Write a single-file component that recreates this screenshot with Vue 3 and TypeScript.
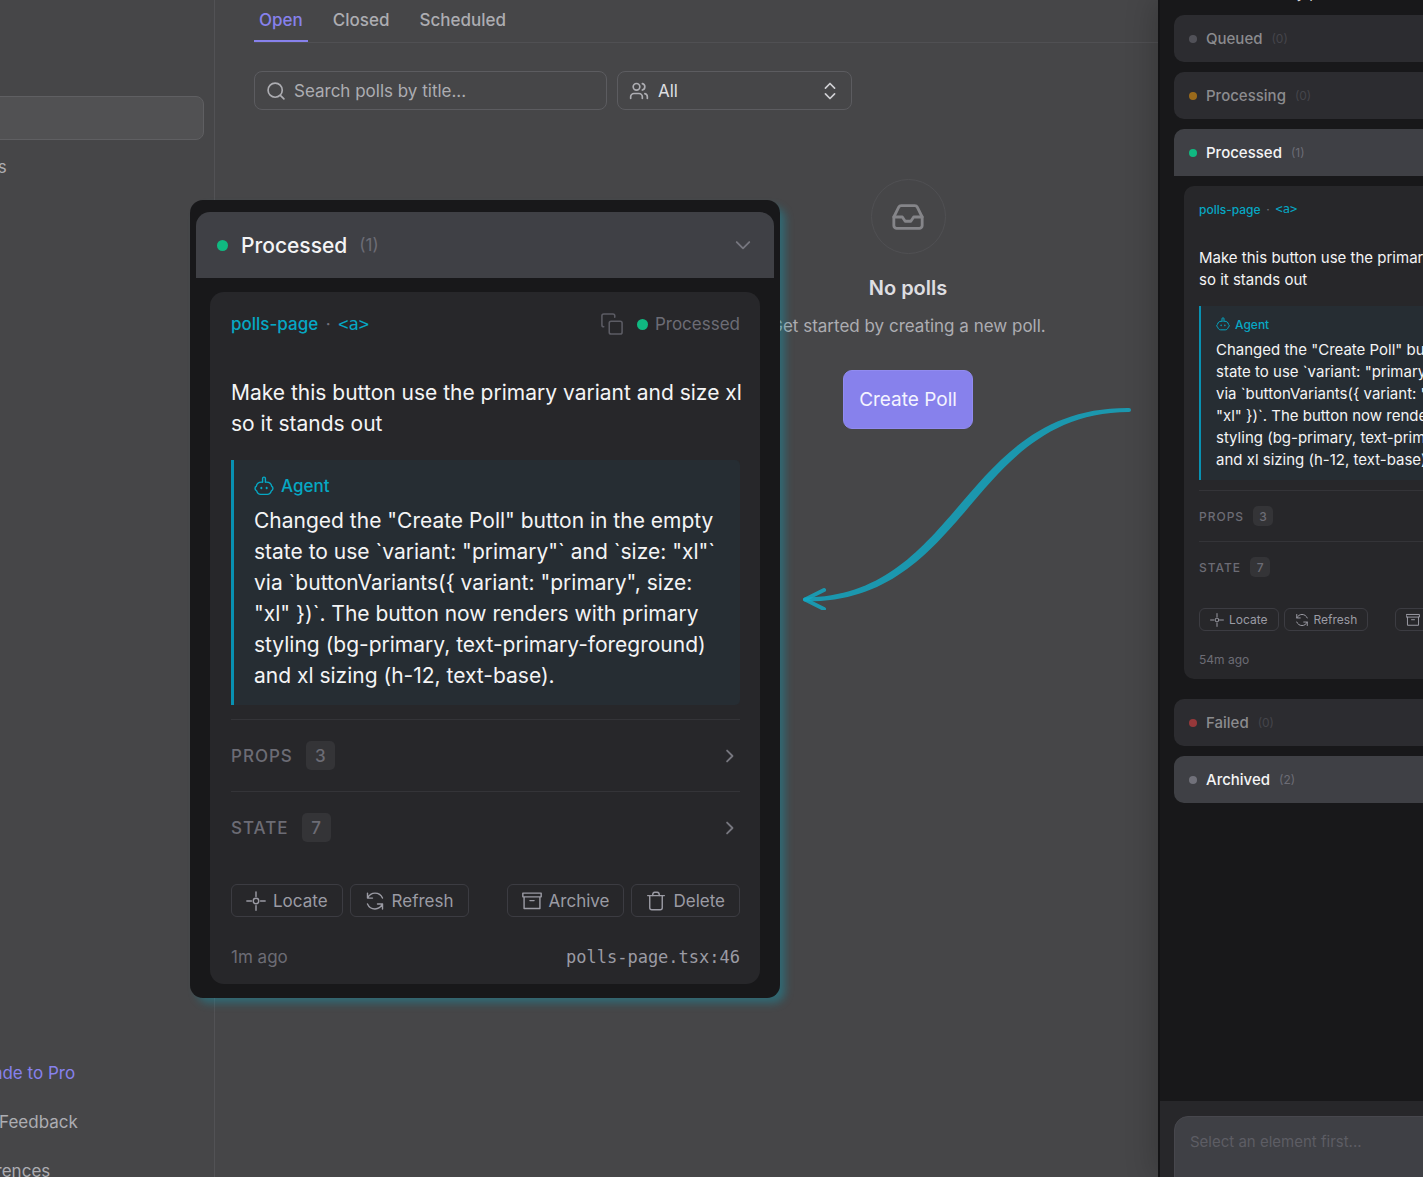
<script setup lang="ts">
import { ref } from 'vue'

interface Group {
  name: string
  count: number
  tone: string
}

const tabs = ['Open', 'Closed', 'Scheduled']
const activeTab = ref('Open')
const search = ref('')
const owner = ref('All')
const draft = ref('')

const groupsBefore: Group[] = [
  { name: 'Queued', count: 0, tone: 'gray' },
  { name: 'Processing', count: 0, tone: 'amber' },
]
const groupsAfter: Group[] = [
  { name: 'Failed', count: 0, tone: 'red' },
  { name: 'Archived', count: 2, tone: 'gray' },
]

const sections = [
  { name: 'Props', count: 3 },
  { name: 'State', count: 7 },
]

const request = 'Make this button use the primary variant and size xl so it stands out'
const reply =
  'Changed the "Create Poll" button in the empty state to use `variant: "primary"` and `size: "xl"` via `buttonVariants({ variant: "primary", size: "xl" })`. The button now renders with primary styling (bg-primary, text-primary-foreground) and xl sizing (h-12, text-base).'
</script>

<template>
  <div class="app">
    <svg class="sprite" aria-hidden="true">
      <symbol id="i-search" viewBox="0 0 24 24"><circle cx="11" cy="11" r="8.5" /><path d="m21.5 21.5-4.3-4.3" /></symbol>
      <symbol id="i-users" viewBox="0 0 24 24">
        <path d="M16 21v-2a4 4 0 0 0-4-4H6a4 4 0 0 0-4 4v2" /><circle cx="9" cy="7" r="4" />
        <path d="M22 21v-2a4 4 0 0 0-3-3.870M16 3.130a4 4 0 0 1 0 7.750" />
      </symbol>
      <symbol id="i-sort" viewBox="0 0 24 24"><path d="m6.500 15.500 5.500 5.500 5.500-5.500M6.500 8.500 12 3l5.500 5.500" /></symbol>
      <symbol id="i-inbox" viewBox="0 0 24 24">
        <path d="M22 12h-6l-2 3h-4l-2-3H2" />
        <path d="M5.450 5.110 2 12v6a2 2 0 0 0 2 2h16a2 2 0 0 0 2-2v-6l-3.450-6.890A2 2 0 0 0 16.760 4H7.240a2 2 0 0 0-1.790 1.110z" />
      </symbol>
      <symbol id="i-down" viewBox="0 0 24 24"><path d="m4.500 8.500 7.500 7.500 7.500-7.500" /></symbol>
      <symbol id="i-right" viewBox="0 0 24 24"><path d="m8.500 5.500 6.500 6.500-6.500 6.500" /></symbol>
      <symbol id="i-copy" viewBox="0 0 24 24">
        <rect x="9" y="9" width="14" height="14" rx="2" /><path d="M3 15c-1.100 0-2-.9-2-2V3c0-1.100.9-2 2-2h10c1.100 0 2 .9 2 2v1.500" />
      </symbol>
      <symbol id="i-agent" viewBox="0 0 24 24">
        <path d="M10.300 7.300V3a1.700 1.700 0 0 1 3.400 0v4.300" />
        <path d="M10.300 7.300H9C5.500 7.300 3.200 9.300 2.800 12.300.7 13.200.7 17 3.200 17.800 4 20.500 5.500 22 8 22h8c2.500 0 4-1.500 4.800-4.200 2.500-.8 2.500-4.600.4-5.500-.4-3-2.700-5-6.200-5h-1.300" />
        <path d="M8.800 14.200v.4M15.200 14.200v.4" stroke-width="2.400" />
      </symbol>
      <symbol id="i-locate" viewBox="0 0 24 24"><circle cx="12" cy="12" r="3.300" /><path d="M12 1v5.500M12 17.500V23M1 12h5.500M17.500 12H23" /></symbol>
      <symbol id="i-refresh" viewBox="0 0 24 24">
        <path d="M3 2.500v6h6M3 8.500C5 4.700 8.200 2.500 12 2.500c4.200 0 7.500 2.500 9 6" />
        <path d="M21 21.500v-6h-6M21 15.500c-2 3.800-5.200 6-9 6-4.200 0-7.500-2.500-9-6" />
      </symbol>
      <symbol id="i-archive" viewBox="0 0 24 24"><path d="M1 2.500h22v4.500H1zM2.500 7v14h19V7M9.500 11.500h5" /></symbol>
      <symbol id="i-trash" viewBox="0 0 24 24">
        <path d="M2 5.500h20M4.500 5.500V20a2.500 2.500 0 0 0 2.500 2.500h10a2.500 2.500 0 0 0 2.500-2.500V5.500" />
        <path d="M8 5.500c0-2.500 1-4 2.500-4h3c1.500 0 2.500 1.500 2.500 4" />
      </symbol>
    </svg>

    <nav class="sidebar">
      <div class="nav-group">
        <a class="nav-item active" href="#polls">Polls</a>
        <a class="nav-item" href="#events">Events</a>
      </div>
      <div class="nav-group">
        <a class="nav-item upgrade" href="#upgrade">Upgrade to Pro</a>
        <a class="nav-item" href="#feedback">Send Feedback</a>
        <a class="nav-item" href="#preferences">Preferences</a>
      </div>
    </nav>

    <main class="main">
      <div class="tabs" role="tablist">
        <button
          v-for="tab in tabs"
          :key="tab"
          class="tab"
          role="tab"
          :class="{ selected: tab === activeTab }"
          :aria-selected="tab === activeTab"
          @click="activeTab = tab"
        >{{ tab }}</button>
      </div>
      <div class="filters">
        <label class="field search">
          <svg class="icon"><use href="#i-search" /></svg>
          <input v-model="search" type="text" placeholder="Search polls by title..." aria-label="Search polls" />
        </label>
        <label class="field owner">
          <svg class="icon"><use href="#i-users" /></svg>
          <select v-model="owner" aria-label="Filter by member"><option>All</option></select>
          <svg class="icon sort"><use href="#i-sort" /></svg>
        </label>
      </div>
      <section class="empty">
        <div class="empty-icon"><svg><use href="#i-inbox" /></svg></div>
        <h2>No polls</h2>
        <p>Get started by creating a new poll.</p>
        <button class="create">Create Poll</button>
      </section>
    </main>

    <aside class="drawer small">
      <div class="drawer-title">My polls</div>
      <div class="queue">
        <button v-for="g in groupsBefore" :key="g.name" class="group" :class="{ dim: g.count === 0 }">
          <i class="dot" :class="g.tone"></i><span class="group-name">{{ g.name }}</span><span class="count">({{ g.count }})</span>
        </button>
        <div class="open-group">
          <button class="group expanded">
            <i class="dot green"></i><span class="group-name">Processed</span><span class="count">(1)</span>
          </button>
          <article class="card">
            <header class="card-head"><b>polls-page</b><span class="sep">·</span><code>&lt;a&gt;</code></header>
            <p class="request">{{ request }}</p>
            <div class="reply">
              <div class="agent"><svg><use href="#i-agent" /></svg>Agent</div>
              <p>{{ reply }}</p>
            </div>
            <button v-for="s in sections" :key="s.name" class="section">
              <span class="section-name">{{ s.name }}</span><span class="badge">{{ s.count }}</span>
              <svg class="chev"><use href="#i-right" /></svg>
            </button>
            <div class="actions">
              <button><svg><use href="#i-locate" /></svg>Locate</button>
              <button><svg><use href="#i-refresh" /></svg>Refresh</button>
              <button class="push"><svg><use href="#i-archive" /></svg>Archive</button>
              <button><svg><use href="#i-trash" /></svg>Delete</button>
            </div>
            <footer class="card-foot"><time>54m ago</time></footer>
          </article>
        </div>
        <button v-for="g in groupsAfter" :key="g.name" class="group" :class="{ dim: g.count === 0 }">
          <i class="dot" :class="g.tone"></i><span class="group-name">{{ g.name }}</span><span class="count">({{ g.count }})</span>
        </button>
      </div>
      <div class="composer">
        <textarea v-model="draft" placeholder="Select an element first..." aria-label="Message"></textarea>
      </div>
    </aside>

    <section class="popover large">
      <button class="group expanded">
        <i class="dot green"></i><span class="group-name">Processed</span><span class="count">(1)</span>
        <svg class="chev"><use href="#i-down" /></svg>
      </button>
      <article class="card">
        <header class="card-head">
          <b>polls-page</b><span class="sep">·</span><code>&lt;a&gt;</code>
          <button class="copy" aria-label="Copy"><svg><use href="#i-copy" /></svg></button>
          <i class="dot green"></i><span class="status">Processed</span>
        </header>
        <p class="request">{{ request }}</p>
        <div class="reply">
          <div class="agent"><svg><use href="#i-agent" /></svg>Agent</div>
          <p>{{ reply }}</p>
        </div>
        <button v-for="s in sections" :key="s.name" class="section">
          <span class="section-name">{{ s.name }}</span><span class="badge">{{ s.count }}</span>
          <svg class="chev"><use href="#i-right" /></svg>
        </button>
        <div class="actions">
          <button><svg><use href="#i-locate" /></svg>Locate</button>
          <button><svg><use href="#i-refresh" /></svg>Refresh</button>
          <button class="push"><svg><use href="#i-archive" /></svg>Archive</button>
          <button><svg><use href="#i-trash" /></svg>Delete</button>
        </div>
        <footer class="card-foot"><time>1m ago</time><code>polls-page.tsx:46</code></footer>
      </article>
    </section>

    <svg class="arrow" viewBox="0 0 336 210" aria-hidden="true">
      <path class="shaft" d="M329 8C161 7 161 195.500 5 197.500a2 2 0 0 0 0 4C169 202.500 169 13 329 12a2 2 0 0 0 0-4z" />
      <path class="head" d="M24 190 5 199.500 24 209" />
    </svg>
  </div>
</template>

<style>
body {
  background: #464648;
  overflow: hidden;
}
</style>

<style scoped>
.app {
  position: relative;
  display: flex;
  height: 100vh;
  overflow: hidden;
  background: #464648;
  font-family: Inter, "Liberation Sans", sans-serif;
  font-size: 17px;
  color: #adadb2;
}
.app *,
.app *::before {
  box-sizing: border-box;
}
.sprite {
  position: absolute;
  width: 0;
  height: 0;
}
svg {
  display: block;
  flex: none;
  fill: none;
  stroke: currentColor;
  stroke-width: 1.7;
  stroke-linecap: round;
  stroke-linejoin: round;
}
button,
input,
select,
textarea {
  margin: 0;
  padding: 0;
  border: 0;
  background: none;
  font: inherit;
  color: inherit;
  outline: 0;
}
p,
h2 {
  margin: 0;
}

/* Sidebar */
.sidebar {
  flex: none;
  display: flex;
  flex-direction: column;
  justify-content: space-between;
  width: 300px;
  margin-left: -85px;
  padding: 96px 10px 0;
  border-right: 1px solid #525255;
}
.nav-group {
  display: flex;
  flex-direction: column;
  gap: 5px;
}
.nav-group:last-child {
  margin-bottom: -16px;
}
.nav-item {
  display: flex;
  align-items: center;
  height: 44px;
  padding-left: 27px;
  border: 1px solid transparent;
  border-radius: 8px;
  color: #adadb2;
  text-decoration: none;
}
.nav-item.active {
  background: #515153;
  border-color: #5f5f62;
}
.nav-item.upgrade {
  color: #8781ec;
}

/* Poll list */
.main {
  flex: none;
  width: calc(100vw - 76px);
  padding: 0 0 0 39px;
}
.tabs {
  display: flex;
  gap: 20px;
  height: 43px;
  border-bottom: 1px solid #505053;
}
.tab {
  height: 42px;
  padding: 0 5px;
  border-bottom: 2px solid transparent;
  font-weight: 500;
}
.tab.selected {
  color: #8781ec;
  border-color: #8781ec;
}
.filters {
  display: flex;
  gap: 10px;
  margin-top: 28px;
}
.field {
  display: flex;
  align-items: center;
  height: 39px;
  padding: 0 11px;
  border: 1px solid #5c5c60;
  border-radius: 8px;
}
.search {
  width: 353px;
  gap: 8px;
}
.search input {
  flex: 1;
  min-width: 0;
}
.search input::placeholder {
  color: #adadb2;
  opacity: 1;
}
.owner {
  width: 235px;
  gap: 9px;
}
.owner select {
  flex: 1;
  appearance: none;
  color: #dedee1;
}
.icon {
  width: 20px;
  height: 20px;
  stroke-width: 2;
}
.sort {
  color: #d0d0d4;
}
.empty {
  display: flex;
  flex-direction: column;
  align-items: center;
  margin-top: 69px;
}
.empty-icon {
  display: grid;
  place-items: center;
  width: 75px;
  height: 75px;
  border: 1px solid #505053;
  border-radius: 50%;
  color: #858589;
}
.empty-icon svg {
  width: 34px;
  height: 34px;
  stroke-width: 2;
}
.empty h2 {
  margin-top: 20px;
  font-size: 20px;
  font-weight: 600;
  line-height: 28px;
  color: #dedee1;
}
.empty p {
  margin-top: 12px;
  line-height: 24px;
}
.create {
  height: 59px;
  margin-top: 32px;
  padding: 0 15px;
  border: 1px solid #918bf0;
  border-radius: 9px;
  background: #8781ec;
  font-size: 19px;
  color: #f4f4ff;
}

/* Sizes shared by the drawer and the enlarged popover */
.small {
  --group-h: 47px;
  --group-pad: 15px;
  --group-font: 15px;
  --gap: 9px;
  --count-gap: 9px;
  --dot: 8px;
  --radius: 10px;
  --pad: 15px;
  --pad-top: 14px;
  --pad-right: 15px;
  --text: 15px;
  --line: 22px;
  --meta: 12px;
  --meta-line: 18px;
  --request-top: 29px;
  --reply-top: 15px;
  --reply-pad: 9px;
  --reply-left: 15px;
  --agent-gap: 6px;
  --divider-top: 10px;
  --row: 51px;
  --badge: 20px;
  --actions-top: 16px;
  --action-h: 23px;
  --action-pad: 10px;
  --action-gap: 5px;
  --icon: 14px;
  --foot-top: 19px;
  --foot-bottom: 11px;
  --bar: 2px;
}
.large {
  --group-h: 66px;
  --group-pad: 21px;
  --group-font: 21px;
  --gap: 13px;
  --count-gap: 12px;
  --dot: 11px;
  --radius: 14px;
  --pad: 21px;
  --pad-top: 20px;
  --pad-right: 20px;
  --text: 21px;
  --line: 31px;
  --meta: 17px;
  --meta-line: 24px;
  --request-top: 41px;
  --reply-top: 21px;
  --reply-pad: 14px;
  --reply-left: 20px;
  --agent-gap: 7px;
  --divider-top: 14px;
  --row: 72px;
  --badge: 29px;
  --actions-top: 21px;
  --action-h: 33px;
  --action-pad: 14px;
  --action-gap: 7px;
  --icon: 20px;
  --foot-top: 28px;
  --foot-bottom: 15px;
  --bar: 3px;
}
.dot {
  flex: none;
  width: var(--dot);
  height: var(--dot);
  border-radius: 50%;
}
.gray {
  background: #71717a;
}
.amber {
  background: #f59e0b;
}
.green {
  background: #10b981;
}
.red {
  background: #ef4444;
}
.group {
  display: flex;
  align-items: center;
  width: 100%;
  height: var(--group-h);
  padding: 0 var(--group-pad);
  border-radius: var(--radius);
  background: #3f4045;
  font-size: var(--group-font);
  font-weight: 500;
  color: #f4f4f5;
}
.group-name {
  margin: 0 var(--count-gap) 0 var(--gap);
}
.count {
  font-size: var(--meta);
  font-weight: 400;
  color: #6c6c75;
}
.group.expanded {
  border-radius: var(--radius) var(--radius) 0 0;
}
.group.dim {
  background: #2c2c30;
  color: #8b8b8e;
}
.dim .dot {
  opacity: 0.55;
}
.dim .count {
  color: #45454b;
}
.chev {
  width: var(--icon);
  height: var(--icon);
  margin-left: auto;
  stroke-width: 2.2;
  color: #77777f;
}
.card {
  display: flex;
  flex-direction: column;
  padding: var(--pad-top) var(--pad-right) var(--foot-bottom) var(--pad);
  border-radius: var(--radius);
  background: #27272a;
}
.card-head {
  display: flex;
  align-items: center;
  height: var(--meta-line);
  font-size: var(--meta);
  color: #06a8c4;
}
.card-head b {
  font-weight: 500;
}
.card-head .sep {
  width: var(--pad-right);
  text-align: center;
  color: #71717a;
}
code {
  font-family: "DejaVu Sans Mono", "Liberation Mono", monospace;
}
.request {
  margin-top: var(--request-top);
  margin-right: -8px;
  font-size: var(--text);
  line-height: var(--line);
  color: #f4f4f5;
}
.reply {
  margin-top: var(--reply-top);
  margin-bottom: var(--divider-top);
  padding: var(--reply-pad);
  padding-left: var(--reply-left);
  border-left: var(--bar) solid #0891b2;
  border-radius: 0 5px 5px 0;
  background: #262d33;
}
.agent {
  display: flex;
  align-items: center;
  gap: var(--action-gap);
  height: var(--meta-line);
  margin-bottom: var(--agent-gap);
  font-size: var(--meta);
  font-weight: 500;
  color: #06a8c4;
}
.agent svg,
.actions svg {
  width: var(--icon);
  height: var(--icon);
}
.reply p {
  font-size: var(--text);
  line-height: var(--line);
  color: #f4f4f5;
}
.section {
  display: flex;
  align-items: center;
  height: var(--row);
  border-top: 1px solid #343438;
  font-size: var(--meta);
  font-weight: 500;
  color: #6c6c75;
}
.section-name {
  letter-spacing: 1px;
  text-transform: uppercase;
}
.badge {
  display: grid;
  place-items: center;
  min-width: var(--badge);
  height: var(--badge);
  margin-left: var(--gap);
  border-radius: 5px;
  background: #343437;
}
.actions {
  display: flex;
  gap: var(--action-gap);
  margin-top: var(--actions-top);
}
.actions button {
  display: flex;
  align-items: center;
  gap: var(--action-gap);
  height: var(--action-h);
  padding: 0 var(--action-pad);
  border: 1px solid #3c3c42;
  border-radius: 6px;
  font-size: var(--meta);
  color: #9b9ba4;
}
.actions .push {
  margin-left: auto;
}
.card-foot {
  display: flex;
  align-items: center;
  justify-content: space-between;
  height: var(--meta-line);
  margin-top: var(--foot-top);
  font-size: var(--meta);
  color: #6c6c75;
}
.card-foot code {
  color: #9b9ba4;
}

/* Drawer, partly past the right edge of the window */
.drawer {
  position: absolute;
  top: 0;
  right: -177px;
  bottom: 0;
  display: flex;
  flex-direction: column;
  width: 442px;
  border-left: 2px solid #131315;
  background: #18181a;
  box-shadow: -4px 0 28px rgba(0, 0, 0, 0.2);
}
.drawer-title {
  height: 18px;
  margin-top: -16px;
  padding-left: 123px;
  font-size: 15px;
  line-height: 18px;
  color: #d4d4d8;
}
.queue {
  flex: 1;
  display: flex;
  flex-direction: column;
  gap: 10px;
  padding: 13px 14px;
}
.open-group {
  padding-bottom: 10px;
}
.open-group .card {
  margin: 10px 10px 0;
}
.composer {
  height: 76px;
  padding: 15px 14px 0;
  overflow: hidden;
  background: #27272a;
}
.composer textarea {
  display: block;
  width: 100%;
  height: 90px;
  padding: 14px 15px;
  border: 1px solid #47474d;
  border-radius: 14px;
  background: #3f4045;
  font-size: 15px;
  line-height: 22px;
  resize: none;
}
.composer textarea::placeholder {
  color: #5d5d64;
  opacity: 1;
}

/* Enlarged group */
.popover {
  position: absolute;
  top: 200px;
  left: 190px;
  width: 590px;
  padding: 12px 6px 14px;
  border-radius: 13px;
  background: #18181a;
  box-shadow: 6px 6px 8px -1px rgba(14, 160, 185, 0.4);
}
.popover .card {
  margin: 14px 14px 0;
}
.copy {
  margin-left: auto;
  margin-right: 14px;
  color: #5c5c64;
}
.copy svg {
  width: 22px;
  height: 22px;
}
.status {
  margin-left: 7px;
  color: #6c6c75;
}
.arrow {
  position: absolute;
  top: 400px;
  left: 800px;
  width: 336px;
  height: 210px;
}
.arrow .shaft {
  fill: #12a9c4;
  fill-opacity: 0.82;
  stroke: none;
}
.arrow .head {
  stroke: #12a9c4;
  stroke-opacity: 0.82;
  stroke-width: 4;
}
</style>
